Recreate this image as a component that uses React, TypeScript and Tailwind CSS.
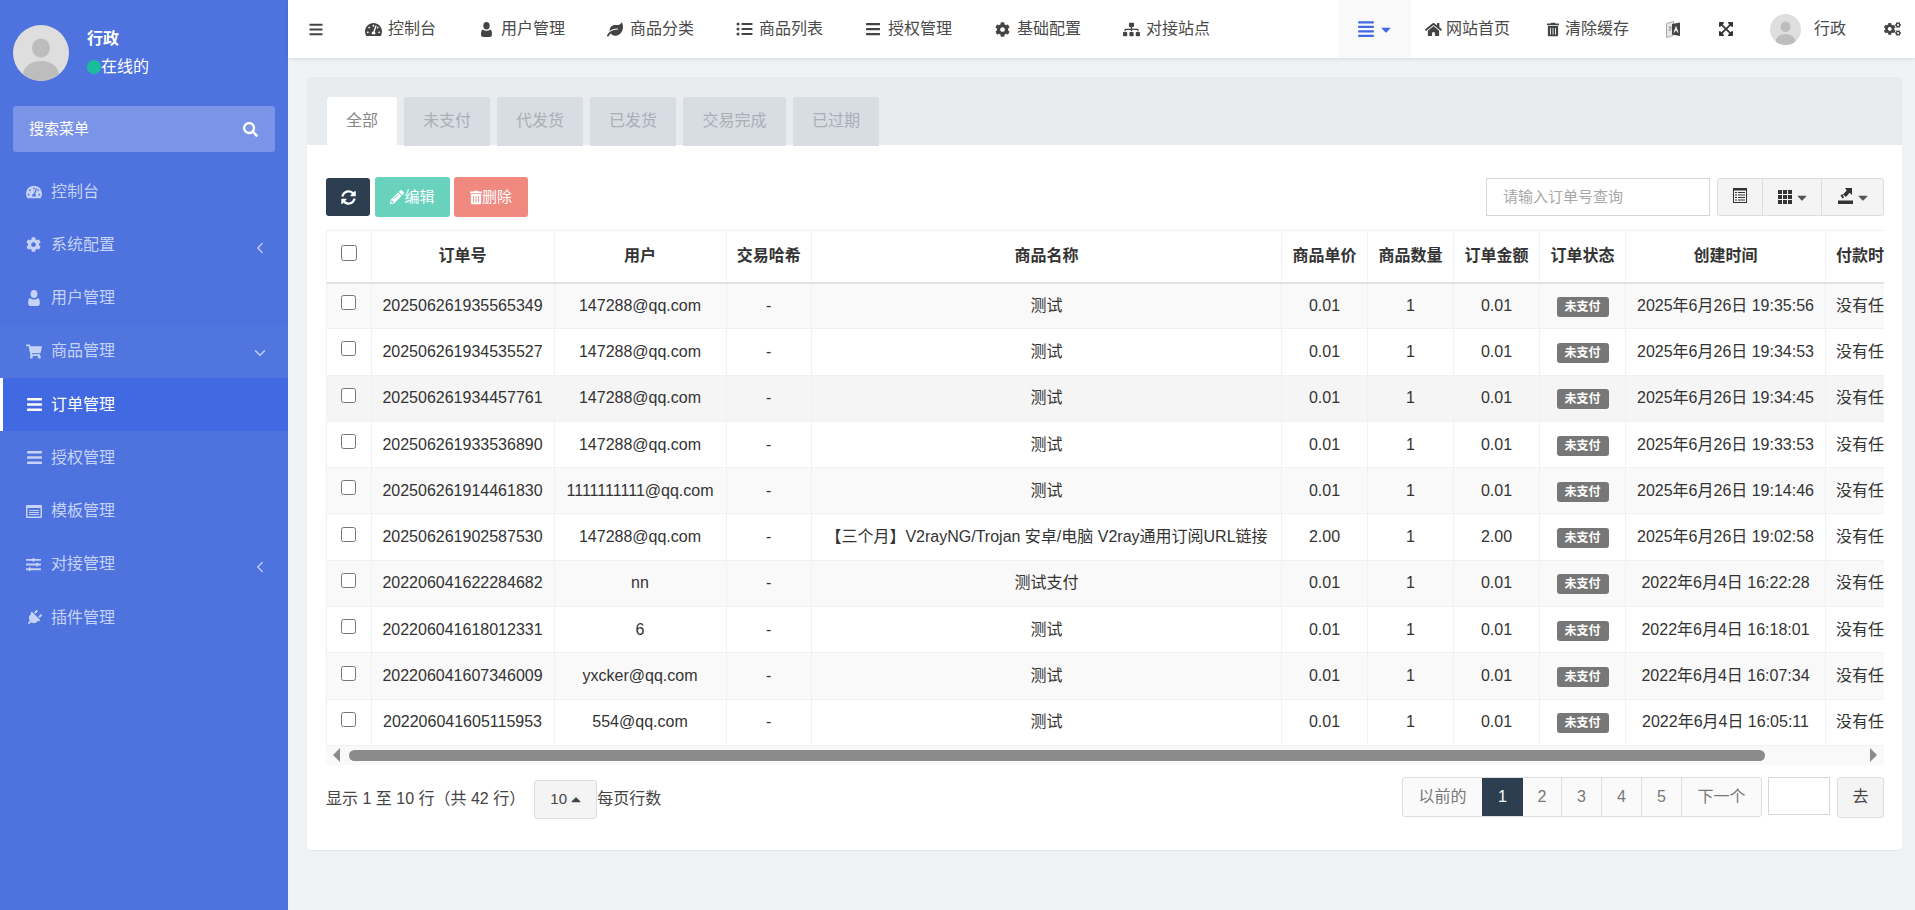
import { ChevronDown, ChevronLeft } from "lucide-react"
import {
  FaAlignJustify,
  FaBars,
  FaCaretDown,
  FaCaretUp,
  FaCog,
  FaCogs,
  FaExpandArrowsAlt,
  FaHome,
  FaLeaf,
  FaListUl,
  FaPencilAlt,
  FaPlug,
  FaSearch,
  FaShoppingCart,
  FaSitemap,
  FaSlidersH,
  FaSyncAlt,
  FaTachometerAlt,
  FaTrashAlt,
} from "react-icons/fa"

const FONT = "[font-family:'Liberation_Sans','Noto_Sans_CJK_SC',sans-serif]"

function UserIcon({ className }: { className?: string }) {
  return (
    <svg viewBox="0 0 11 15" className={className} fill="currentColor">
      <ellipse cx="5.5" cy="3.8" rx="3.2" ry="3.8" />
      <path d="M1.8 7.4c1 .9 2.2 1.4 3.7 1.4s2.700-.5 3.700-1.400C10.400 7.800 11 9.400 11 12.500 11 14 10.200 15 8.800 15H2.200C.8 15 0 14 0 12.500 0 9.400.6 7.800 1.800 7.400z" />
    </svg>
  )
}

function TemplateIcon({ className }: { className?: string }) {
  return (
    <svg viewBox="0 0 16 13" className={className} fill="currentColor">
      <path fillRule="evenodd" d="M1 0h14a1 1 0 0 1 1 1v11a1 1 0 0 1-1 1H1a1 1 0 0 1-1-1V1a1 1 0 0 1 1-1zm.500 3v8.500h13V3z" />
      <path d="M3 5h10v1H3zM3 7h10v1H3zM3 9h10v1H3z" />
    </svg>
  )
}

const sideMenu = [
  { icon: FaTachometerAlt, size: "w-[16px] h-[16px]", label: "控制台" },
  { icon: FaCog, size: "w-[15px] h-[15px]", label: "系统配置", arrow: "left" },
  { icon: UserIcon, size: "ml-[2px] w-[12px] h-[16px]", label: "用户管理" },
  { icon: FaShoppingCart, size: "w-[16px] h-[15px]", label: "商品管理", arrow: "down", hover: true },
  { icon: FaBars, size: "w-[17px] h-[17px]", label: "订单管理", active: true },
  { icon: FaBars, size: "w-[17px] h-[17px]", label: "授权管理" },
  { icon: TemplateIcon, size: "w-[16px] h-[13px]", label: "模板管理" },
  { icon: FaSlidersH, size: "w-[15px] h-[15px]", label: "对接管理", arrow: "left" },
  { icon: FaPlug, size: "w-[16px] h-[16px] rotate-45", label: "插件管理" },
]

const topMenu = [
  { icon: FaTachometerAlt, size: "w-[17px] h-[17px]", label: "控制台" },
  { icon: UserIcon, size: "w-[11px] h-[15px]", label: "用户管理" },
  { icon: FaLeaf, size: "w-[16px] h-[15px]", label: "商品分类" },
  { icon: FaListUl, size: "w-[17px] h-[16px]", label: "商品列表" },
  { icon: FaBars, size: "w-[16px] h-[16px]", label: "授权管理" },
  { icon: FaCog, size: "w-[15px] h-[15px]", label: "基础配置" },
  { icon: FaSitemap, size: "w-[17px] h-[15px]", label: "对接站点" },
]

const tabs = ["未支付", "代发货", "已发货", "交易完成", "已过期"]

const headers = ["订单号", "用户", "交易哈希", "商品名称", "商品单价", "商品数量", "订单金额", "订单状态", "创建时间"]

const orders = [
  ["202506261935565349", "147288@qq.com", "测试", "0.01", "2025年6月26日 19:35:56"],
  ["202506261934535527", "147288@qq.com", "测试", "0.01", "2025年6月26日 19:34:53"],
  ["202506261934457761", "147288@qq.com", "测试", "0.01", "2025年6月26日 19:34:45"],
  ["202506261933536890", "147288@qq.com", "测试", "0.01", "2025年6月26日 19:33:53"],
  ["202506261914461830", "1111111111@qq.com", "测试", "0.01", "2025年6月26日 19:14:46"],
  ["202506261902587530", "147288@qq.com", "【三个月】V2rayNG/Trojan 安卓/电脑 V2ray通用订阅URL链接", "2.00", "2025年6月26日 19:02:58"],
  ["202206041622284682", "nn", "测试支付", "0.01", "2022年6月4日 16:22:28"],
  ["202206041618012331", "6", "测试", "0.01", "2022年6月4日 16:18:01"],
  ["202206041607346009", "yxcker@qq.com", "测试", "0.01", "2022年6月4日 16:07:34"],
  ["202206041605115953", "554@qq.com", "测试", "0.01", "2022年6月4日 16:05:11"],
]

function Avatar({ className }: { className: string }) {
  return (
    <svg viewBox="0 0 56 56" className={className}>
      <clipPath id="avatar-clip">
        <circle cx="28" cy="28" r="28" />
      </clipPath>
      <g clipPath="url(#avatar-clip)">
        <rect width="56" height="56" fill="#dedede" />
        <ellipse cx="28" cy="23" rx="9" ry="9.500" fill="#bdbdbd" />
        <ellipse cx="28" cy="50" rx="18" ry="14" fill="#bdbdbd" />
      </g>
    </svg>
  )
}

function Sidebar() {
  return (
    <aside className="w-[288px] shrink-0 bg-[#4e72de] pt-[25px]">
      <div className="flex pl-[13px]">
        <Avatar className="w-[56px] h-[56px]" />
        <div className="ml-[18px] pt-[4px]">
          <p className="font-bold text-white leading-[20px]">行政</p>
          <div className="mt-[8px] flex items-center text-white leading-[20px]">
            <span className="w-[14px] h-[14px] rounded-full bg-[#1abc9c]" />
            在线的
          </div>
        </div>
      </div>
      <div className="mx-[13px] mt-[25px] h-[46px] rounded-[3px] bg-[#7a94e8] flex items-center justify-between pl-[16px] pr-[17px] text-white text-[15px]">
        搜索菜单
        <FaSearch className="w-[15px] h-[15px]" />
      </div>
      <nav className="mt-[13px]">
        {sideMenu.map((m) => (
          <div
            key={m.label}
            className={
              m.active
                ? "h-[53.25px] flex items-center bg-[#4169e1] border-l-[3px] border-white pl-[23px] pr-[19px] text-white"
                : m.hover
                  ? "h-[53.25px] flex items-center bg-[#5175de] pl-[26px] pr-[19px] text-[#c6d2f8]"
                  : "h-[53.25px] flex items-center pl-[26px] pr-[19px] text-[#c6d2f8]"
            }
          >
            <span className="w-[25px] shrink-0 flex items-center">
              <m.icon className={m.size} />
            </span>
            {m.label}
            {m.arrow === "left" && <ChevronLeft size={18} strokeWidth={1.75} className="ml-auto mt-[6px]" />}
            {m.arrow === "down" && <ChevronDown size={18} strokeWidth={1.75} className="ml-auto mt-[4px]" />}
          </div>
        ))}
      </nav>
    </aside>
  )
}

function TopBar() {
  return (
    <header className="h-[58px] shrink-0 bg-white shadow-[0_1px_4px_rgba(0,0,0,0.1)] flex items-center text-[#4a4a4a] relative">
      <FaBars className="ml-[21px] w-[14px] h-[15px] text-[#444]" />
      <div className="ml-[21px] flex">
        {topMenu.map((m) => (
          <div key={m.label} className="flex items-center px-[21px]">
            <span className="w-[16px] mr-[7px] flex items-center justify-center">
              <m.icon className={`${m.size} shrink-0 text-[#444]`} />
            </span>
            {m.label}
          </div>
        ))}
      </div>
      <div className="ml-auto flex items-center h-full pr-[14px]">
        <div className="w-[73px] h-full bg-[#f9f9f9] flex items-center pl-[19px] gap-[6px] text-[#4169e1]">
          <FaAlignJustify className="w-[18px] h-[18px]" />
          <FaCaretDown className="w-[10px] h-[15px]" />
        </div>
        <div className="ml-[14px] flex items-center gap-[4px]">
          <FaHome className="w-[17px] h-[15px] text-[#444]" />
          网站首页
        </div>
        <div className="ml-[37px] flex items-center gap-[6px]">
          <FaTrashAlt className="w-[12px] h-[15px] text-[#444]" />
          清除缓存
        </div>
        <svg viewBox="0 0 15 17" className="ml-[37px] w-[15px] h-[17px]">
          <path d="M.5 2.500l7-2v14l-7 2z" fill="#e8e8e8" stroke="#aaaaaa" />
          <path d="M6 3l8-1.500V15l-8-1.500z" fill="#444444" />
          <path d="M10 4.500l2.500 7h-1.300l-.5-1.500H9.300l-.5 1.500H7.500z" fill="#e8e8e8" />
          <path d="M2.500 6h3M4 6v4M2.500 10l3-3" fill="none" stroke="#888888" strokeWidth="0.8" />
        </svg>
        <FaExpandArrowsAlt className="ml-[37px] w-[16px] h-[16px] text-[#333]" />
        <Avatar className="ml-[36px] w-[31px] h-[31px]" />
        <span className="ml-[13px]">行政</span>
        <FaCogs className="ml-[38px] w-[17px] h-[16px] text-[#444]" />
      </div>
    </header>
  )
}

function Tabs() {
  return (
    <div className="h-[68px] bg-[#e8ecef] rounded-t-[4px] pl-[20px] pt-[20px] flex gap-[7px]">
      <div className="w-[70px] h-[48px] rounded-t-[3px] bg-white text-[#888] flex items-center justify-center">全部</div>
      {tabs.map((t) => (
        <div
          key={t}
          className={
            t === "交易完成"
              ? "px-[19.5px] h-[49px] rounded-t-[3px] bg-[#d8dde4] text-[#a9afb5] flex items-center justify-center pb-[1px]"
              : "px-[19px] h-[49px] rounded-t-[3px] bg-[#d8dde4] text-[#a9afb5] flex items-center justify-center pb-[1px]"
          }
        >
          {t}
        </div>
      ))}
    </div>
  )
}

function Toolbar() {
  return (
    <div className="flex items-center h-[40px]">
      <button className="w-[44px] h-[38px] rounded-[3px] bg-[#2c3e50] text-white flex items-center justify-center">
        <FaSyncAlt className="w-[15px] h-[15px]" />
      </button>
      <button className="ml-[5px] w-[75px] h-[40px] rounded-[3px] bg-[#68d2bd] text-white text-[15px] flex items-center justify-center">
        <FaPencilAlt className="w-[14px] h-[14px]" />
        编辑
      </button>
      <button className="ml-[4px] w-[74px] h-[40px] rounded-[3px] bg-[#f0897f] text-white text-[15px] flex items-center justify-center">
        <FaTrashAlt className="w-[12px] h-[15px]" />
        删除
      </button>
      <div className="ml-auto w-[224px] h-[38px] border border-[#d2d6de] flex items-center pl-[16px] text-[15px] text-[#a8a8a8]">
        请输入订单号查询
      </div>
      <div className="ml-[7px] h-[38px] w-[167px] flex rounded-[3px] border border-[#dddddd] bg-[#f4f4f4] text-[#333]">
        <div className="w-[45px] flex items-center justify-center border-r border-[#dddddd]">
          <svg viewBox="0 0 14 15" className="w-[14px] h-[15px] mb-[3px]">
            <path d="M0 0h14v15H0z" fill="#333" />
            <path d="M1 2.500h12V14H1z" fill="#f4f4f4" />
            <path d="M2 4h2v1H2zM5 4h7v1H5zM2 6.500h2v1H2zM5 6.500h7v1H5zM2 9h2v1H2zM5 9h7v1H5zM2 11.500h2v1H2zM5 11.500h7v1H5z" fill="#333" />
          </svg>
        </div>
        <div className="w-[59px] flex items-center justify-center gap-[5px] border-r border-[#dddddd]">
          <svg viewBox="0 0 14 14" className="w-[14px] h-[14px]" fill="#333">
            <path d="M0 0h4v4H0zM5 0h4v4H5zM10 0h4v4h-4zM0 5h4v4H0zM5 5h4v4H5zM10 5h4v4h-4zM0 10h4v4H0zM5 10h4v4H5zM10 10h4v4h-4z" />
          </svg>
          <FaCaretDown className="w-[10px] h-[15px] text-[#555]" />
        </div>
        <div className="flex-1 flex items-center justify-center gap-[5px]">
          <svg viewBox="0 0 15 16" className="w-[15px] h-[16px] mb-[2px]" fill="#333">
            <path d="M0 12.500h15V16H0z" />
            <path d="M7 0h7v7l-2.400-2.200L8 9 5 6.500l3.700-4z" />
            <path d="M2.500 7.500L4.500 6 6 9.500 4.500 10.500z" />
          </svg>
          <FaCaretDown className="w-[10px] h-[15px] text-[#555]" />
        </div>
      </div>
    </div>
  )
}

function OrderTable() {
  const th = "border border-[#f1f1f1] border-b-2 border-b-[#e2e2e2] font-bold text-[#333] text-center whitespace-nowrap overflow-hidden"
  const td = "border border-[#f1f1f1] text-center whitespace-nowrap text-[#333] overflow-hidden"

  return (
    <div className="mt-[13px] w-[1558px] overflow-hidden">
      <table className="table-fixed w-[1700px] border-collapse">
        <colgroup>
          <col className="w-[44.5px]" />
          <col className="w-[183px]" />
          <col className="w-[172px]" />
          <col className="w-[85.5px]" />
          <col className="w-[470px]" />
          <col className="w-[86px]" />
          <col className="w-[86px]" />
          <col className="w-[86px]" />
          <col className="w-[86px]" />
          <col className="w-[200px]" />
          <col className="w-[201px]" />
        </colgroup>
        <thead>
          <tr className="h-[52px]">
            <th className={th}>
              <input type="checkbox" className="block mx-auto mb-[6px] w-[16px] h-[16px]" />
            </th>
            {headers.map((h) => (
              <th key={h} className={th}>
                {h}
              </th>
            ))}
            <th className={`${th} text-left pl-[10px]`}>付款时间</th>
          </tr>
        </thead>
        <tbody>
          {orders.map((o, i) => (
            <tr key={o[0]} className={i === 2 ? "h-[46.3px] bg-[#f5f5f5]" : i % 2 === 0 ? "h-[46.3px] bg-[#f9f9f9]" : "h-[46.3px] bg-white"}>
              <td className={td}>
                <input type="checkbox" className="block mx-auto mb-[6px] w-[15px] h-[15px]" />
              </td>
              <td className={td}>{o[0]}</td>
              <td className={td}>{o[1]}</td>
              <td className={td}>-</td>
              <td className={td}>{o[2]}</td>
              <td className={td}>{o[3]}</td>
              <td className={td}>1</td>
              <td className={td}>{o[3]}</td>
              <td className={td}>
                <span className="inline-flex items-center justify-center w-[52px] h-[20px] rounded-[3px] bg-[#777777] text-white text-[12px] font-bold">未支付</span>
              </td>
              <td className={td}>{o[4]}</td>
              <td className={`${td} text-left pl-[10px]`}>没有任何时间</td>
            </tr>
          ))}
        </tbody>
      </table>
      <div className="h-[19px] bg-[#f9f9f9] flex items-center pl-[7px]">
        <svg viewBox="0 0 7 14" className="w-[7px] h-[14px] shrink-0">
          <path d="M7 0v14L0 7z" fill="#8b8b8b" />
        </svg>
        <div className="ml-[9px] w-[1416px] h-[11px] rounded-full bg-[#8b8b8b]" />
        <svg viewBox="0 0 7 14" className="ml-[105px] w-[7px] h-[14px] shrink-0">
          <path d="M0 0v14l7-7z" fill="#8b8b8b" />
        </svg>
      </div>
    </div>
  )
}

function Footer() {
  const page = "flex items-center justify-center border-r border-[#dddddd]"

  return (
    <div className="mt-[12px] flex items-start">
      <div className="flex items-center pt-[3px]">
        <span className="text-[#444] whitespace-nowrap">显示 1 至 10 行（共 42 行）</span>
        <div className="ml-[9px] w-[63px] h-[39px] rounded-[3px] border border-[#dddddd] bg-[#f4f4f4] text-[#444] text-[15px] flex items-center justify-center gap-[4px]">
          10
          <FaCaretUp className="w-[10px] h-[15px]" />
        </div>
        <span className="text-[#444]">每页行数</span>
      </div>
      <div className="ml-auto flex items-start">
        <div className="h-[40px] flex rounded-[3px] border border-[#dddddd] bg-[#fafafa] text-[#777]">
          <div className="w-[79px] flex items-center justify-center">以前的</div>
          <div className="w-[41px] bg-[#2c3e50] text-white flex items-center justify-center">1</div>
          <div className={`${page} w-[39px]`}>2</div>
          <div className={`${page} w-[40px]`}>3</div>
          <div className={`${page} w-[40px]`}>4</div>
          <div className={`${page} w-[40px]`}>5</div>
          <div className="w-[79px] flex items-center justify-center">下一个</div>
        </div>
        <div className="ml-[6px] w-[62px] h-[38px] border border-[#d2d6de] bg-white" />
        <div className="ml-[7px] w-[47px] h-[41px] rounded-[3px] border border-[#dddddd] bg-[#f4f4f4] text-[#444] flex items-center justify-center">去</div>
      </div>
    </div>
  )
}

export default function App() {
  return (
    <div className={`${FONT} flex h-[910px] w-full overflow-hidden bg-[#eff3f6] text-[16px]`}>
      <Sidebar />
      <div className="flex-1 min-w-0 flex flex-col">
        <TopBar />
        <main className="pt-[19px] pl-[19px] pr-[13px]">
          <div className="rounded-[4px] bg-white shadow-[0_1px_1px_rgba(0,0,0,0.05)]">
            <Tabs />
            <div className="pl-[19px] pr-[18px] pt-[32px] pb-[31px]">
              <Toolbar />
              <OrderTable />
              <Footer />
            </div>
          </div>
        </main>
      </div>
    </div>
  )
}
